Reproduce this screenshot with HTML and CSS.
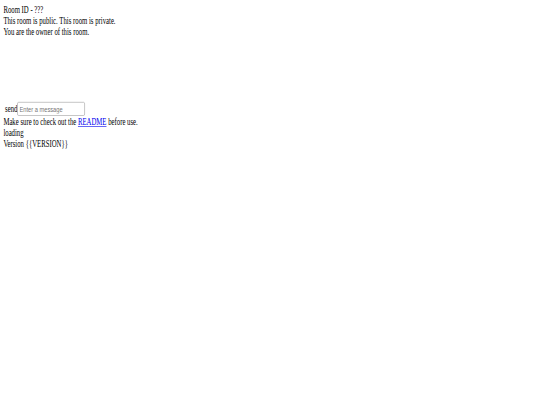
FILE: index.html
```html
<!DOCTYPE html>
<html>
<head>
<meta charset="utf-8">
<title>Room</title>
<link rel="stylesheet" href="styles.css">
</head>
<body>
<div class="frame">
<div class="page">
  <div class="line">Room ID - ???</div>
  <div class="line"><span>This room is public.</span> <span>This room is private.</span></div>
  <div class="line">You are the owner of this room.</div>
  <div class="messages"></div>
  <form class="send-row"><span class="send-label">send</span><input class="msg-input" type="text" placeholder="Enter a message"></form>
  <div class="line">Make sure to check out the <a href="#">README</a> before use.</div>
  <div class="line">loading</div>
  <div class="line">Version {{VERSION}}</div>
</div>
</div>
</body>
</html>
```
FILE: styles.css
```css
html, body {
  margin: 0;
  padding: 0;
  background: #fff;
  overflow: hidden;
}
.frame {
  width: 540px;
  height: 405px;
  overflow: hidden;
}
.page {
  width: 1264px;
  height: 659px;
  padding: 8px;
  font-family: "Liberation Serif", "Times New Roman", serif;
  font-size: 16px;
  color: #000;
  transform: scale(0.421875, 0.6);
  transform-origin: 0 0;
}
.line {
  line-height: normal;
}
.messages {
  height: 108px;
}
.send-row {
  margin: 0;
  padding-bottom: 2px;
}
.send-label {
  padding-left: 4px;
}
.msg-input {
  box-sizing: border-box;
  width: 160px;
  height: 23px;
  padding: 1px 4px;
  border: 1px solid #8f8f8f;
  border-radius: 3px;
  font-family: "Liberation Sans", Arial, sans-serif;
  font-size: 13.5px;
  vertical-align: baseline;
}
.msg-input::placeholder {
  color: #757575;
}
a {
  color: #0000ee;
}
```
